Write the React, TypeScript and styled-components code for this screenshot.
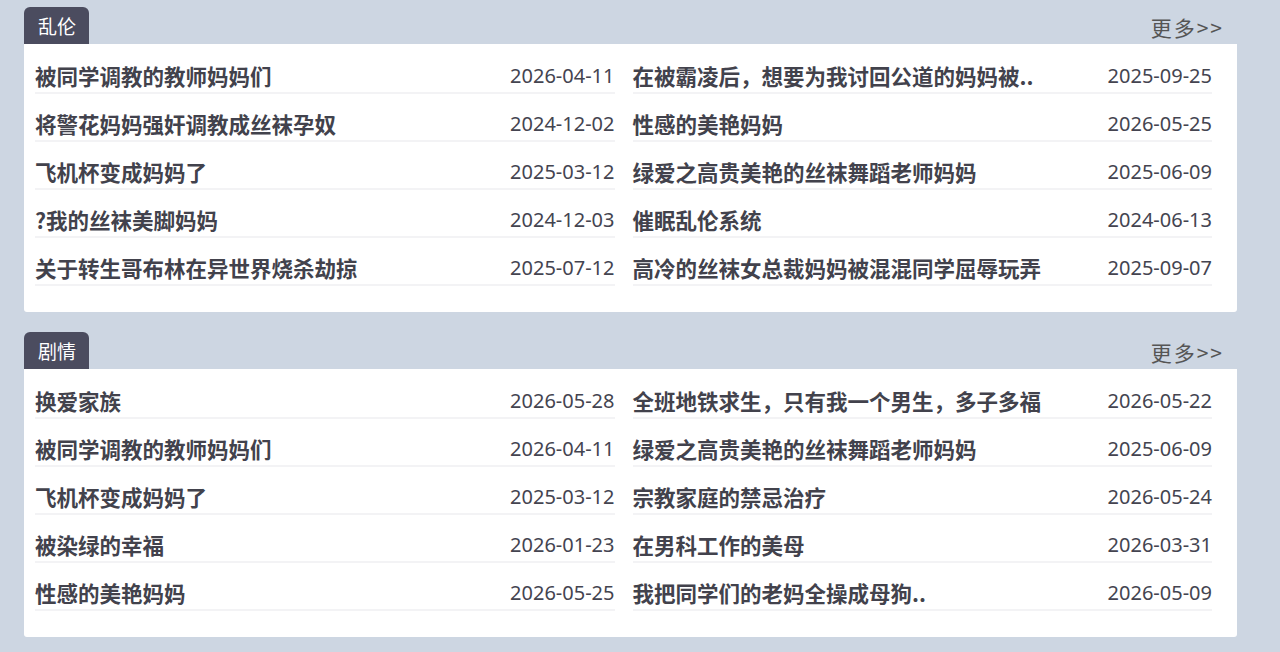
import React from "react";
import styled, { createGlobalStyle } from "styled-components";

const Global = createGlobalStyle`
  html, body { margin: 0; padding: 0; background: #cdd6e2; }
  body { font-family: "Noto Sans", "Noto Sans CJK SC", sans-serif; }
`;

const Page = styled.div`
  padding: 7px 0 0 24px;
  width: 1213px;
  display: flex;
  flex-direction: column;
  gap: 20px;
`;

const Section = styled.section`
  display: flex;
  flex-direction: column;
`;

const Head = styled.div`
  height: 37px;
  display: flex;
  align-items: stretch;
  justify-content: space-between;
`;

const Tab = styled.div`
  background: #4b4c5f;
  color: #fff;
  border-radius: 6px 6px 0 0;
  padding: 0 13px 0 14px;
  display: flex;
  align-items: center;
  font-family: "Noto Sans CJK SC", sans-serif;
  font-size: 19px;
`;

const More = styled.a`
  align-self: flex-end;
  margin-right: 13px;
  margin-bottom: 2px;
  color: #555;
  font-family: "Noto Sans CJK SC", sans-serif;
  font-size: 21px;
  line-height: 30px;
  text-decoration: none;
  letter-spacing: 2px;
`;

const Panel = styled.div`
  background: #fff;
  border-radius: 0 0 3px 3px;
  padding: 14px 25px 26px 11px;
  display: grid;
  grid-template-columns: 1fr 1fr;
  column-gap: 18px;
  row-gap: 12px;
`;

const Row = styled.div`
  height: 36px;
  display: flex;
  align-items: center;
  justify-content: space-between;
  border-bottom: 2px solid #f3f3f5;
  box-sizing: border-box;
`;

const Title = styled.span`
  font-family: "Noto Sans CJK SC", sans-serif;
  font-weight: 700;
  font-size: 21.5px;
  color: #42424c;
  white-space: nowrap;
`;

const Date = styled.span`
  font-family: "Noto Sans", sans-serif;
  font-size: 20px;
  color: #444450;
`;

type Item = [string, string];

const sections: { name: string; items: Item[] }[] = [
  {
    name: "乱伦",
    items: [
      ["被同学调教的教师妈妈们", "2026-04-11"],
      ["在被霸凌后，想要为我讨回公道的妈妈被..", "2025-09-25"],
      ["将警花妈妈强奸调教成丝袜孕奴", "2024-12-02"],
      ["性感的美艳妈妈", "2026-05-25"],
      ["飞机杯变成妈妈了", "2025-03-12"],
      ["绿爱之高贵美艳的丝袜舞蹈老师妈妈", "2025-06-09"],
      ["?我的丝袜美脚妈妈", "2024-12-03"],
      ["催眠乱伦系统", "2024-06-13"],
      ["关于转生哥布林在异世界烧杀劫掠", "2025-07-12"],
      ["高冷的丝袜女总裁妈妈被混混同学屈辱玩弄", "2025-09-07"],
    ],
  },
  {
    name: "剧情",
    items: [
      ["换爱家族", "2026-05-28"],
      ["全班地铁求生，只有我一个男生，多子多福", "2026-05-22"],
      ["被同学调教的教师妈妈们", "2026-04-11"],
      ["绿爱之高贵美艳的丝袜舞蹈老师妈妈", "2025-06-09"],
      ["飞机杯变成妈妈了", "2025-03-12"],
      ["宗教家庭的禁忌治疗", "2026-05-24"],
      ["被染绿的幸福", "2026-01-23"],
      ["在男科工作的美母", "2026-03-31"],
      ["性感的美艳妈妈", "2026-05-25"],
      ["我把同学们的老妈全操成母狗..", "2026-05-09"],
    ],
  },
];

export default function App() {
  return (
    <>
      <Global />
      <Page>
        {sections.map((s) => (
          <Section key={s.name}>
            <Head>
              <Tab>{s.name}</Tab>
              <More href="#">更多&gt;&gt;</More>
            </Head>
            <Panel>
              {s.items.map(([t, d], i) => (
                <Row key={i}>
                  <Title>{t}</Title>
                  <Date>{d}</Date>
                </Row>
              ))}
            </Panel>
          </Section>
        ))}
      </Page>
    </>
  );
}
